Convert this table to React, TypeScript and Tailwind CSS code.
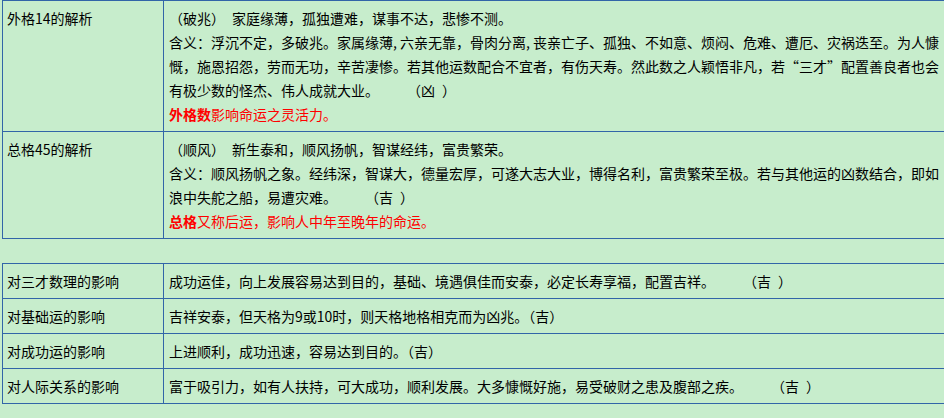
const FONT = { fontFamily: '"Noto Sans CJK SC", "Liberation Sans", sans-serif' };

function Gap({ w = 28 }: { w?: number }) {
  return <span className="inline-block" style={{ width: w }} />;
}

function Red({ bold, children }: { bold?: string; children: React.ReactNode }) {
  return (
    <div className="text-[#ff0000]">
      {bold && <b className="font-bold">{bold}</b>}
      {children}
    </div>
  );
}

type Row = { label: string; lines: React.ReactNode[] };

const ANALYSIS: Row[] = [
  {
    label: "外格14的解析",
    lines: [
      <>（破兆）<Gap w={7} />家庭缘薄，孤独遭难，谋事不达，悲惨不测。</>,
      <>含义：浮沉不定，多破兆。家属缘薄<span className="inline-block w-[7px]">,</span>六亲无靠，骨肉分离<span className="inline-block w-[7px]">,</span>丧亲亡子、孤独、不如意、烦闷、危难、遭厄、灾祸迭至。为人慷</>,
      <>慨，施恩招怨，劳而无功，辛苦凄惨。若其他运数配合不宜者，有伤天寿。然此数之人颖悟非凡，若“三才”配置善良者也会</>,
      <>有极少数的怪杰、伟人成就大业。<Gap />（凶<Gap w={7} />）</>,
      <Red bold="外格数">影响命运之灵活力。</Red>,
    ],
  },
  {
    label: "总格45的解析",
    lines: [
      <>（顺风）<Gap w={7} />新生泰和，顺风扬帆，智谋经纬，富贵繁荣。</>,
      <>含义：顺风扬帆之象。经纬深，智谋大，德量宏厚，可遂大志大业，博得名利，富贵繁荣至极。若与其他运的凶数结合，即如</>,
      <>浪中失舵之船，易遭灾难。<Gap />（吉<Gap w={7} />）</>,
      <Red bold="总格">又称后运，影响人中年至晚年的命运。</Red>,
    ],
  },
];

const EFFECTS: Row[] = [
  {
    label: "对三才数理的影响",
    lines: [<>成功运佳，向上发展容易达到目的，基础、境遇俱佳而安泰，必定长寿享福，配置吉祥。<Gap />（吉<Gap w={7} />）</>],
  },
  {
    label: "对基础运的影响",
    lines: [<>吉祥安泰，但天格为9或10时，则天格地格相克而为凶兆。（吉）</>],
  },
  {
    label: "对成功运的影响",
    lines: [<>上进顺利，成功迅速，容易达到目的。（吉）</>],
  },
  {
    label: "对人际关系的影响",
    lines: [<>富于吸引力，如有人扶持，可大成功，顺利发展。大多慷慨好施，易受破财之患及腹部之疾。<Gap />（吉<Gap w={7} />）</>],
  },
];

function InfoTable({ rows }: { rows: Row[] }) {
  return (
    <div className="ml-[2px] w-[1000px] border-t border-l border-[#3265a8]">
      {rows.map((r) => (
        <div key={r.label} className="flex border-b border-[#3265a8]">
          <div className="w-[161px] shrink-0 border-r border-[#3265a8] px-[4px] py-[5px]">{r.label}</div>
          <div className="flex-1 px-[5px] py-[5px]">
            {r.lines.map((l, i) => (
              <div key={i}>{l}</div>
            ))}
          </div>
        </div>
      ))}
    </div>
  );
}

export default function App() {
  return (
    <div
      className="h-[418px] w-[944px] overflow-hidden whitespace-nowrap bg-[#c7edcc] text-[14px] leading-[24px] text-black"
      style={FONT}
    >
      <InfoTable rows={ANALYSIS} />
      <div className="h-[24px]" />
      <InfoTable rows={EFFECTS} />
    </div>
  );
}
